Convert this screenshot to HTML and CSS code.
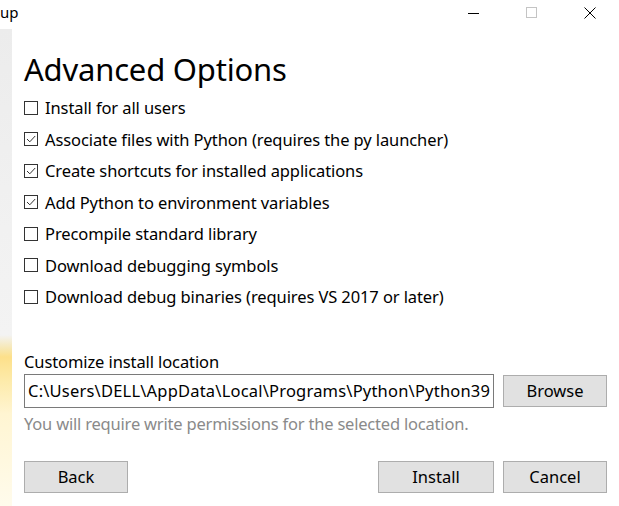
FILE: index.html
```html
<!DOCTYPE html>
<html>
<head>
<meta charset="utf-8">
<link rel="stylesheet" href="styles.css">
</head>
<body>
<div class="window">
  <div class="titlebar">
    <span class="title">up</span>
    <div class="caption">
      <span class="cap-btn"><svg width="12" height="12" viewBox="0 0 12 12"><path d="M0 6.5H11" stroke="#000" stroke-width="1"/></svg></span>
      <span class="cap-btn"><svg width="12" height="12" viewBox="0 0 12 12"><rect x="0.5" y="0.5" width="10" height="10" fill="none" stroke="#c4c4c4" stroke-width="1"/></svg></span>
      <span class="cap-btn"><svg width="12" height="12" viewBox="0 0 12 12"><path d="M0.5 0.5L11.5 11.5M11.5 0.5L0.5 11.5" stroke="#000" stroke-width="1"/></svg></span>
    </div>
  </div>
  <div class="body-area">
    <div class="sidebar"></div>
    <div class="content">
      <h1 class="heading">Advanced Options</h1>
      <ul class="options">
        <li class="option"><span class="box"></span>Install for all users</li>
        <li class="option"><span class="box checked"><svg width="12" height="12" viewBox="0 0 12 12"><path d="M2 6L4.8 8.8L10.2 3" fill="none" stroke="#333" stroke-width="1"/></svg></span>Associate files with Python (requires the py launcher)</li>
        <li class="option"><span class="box checked"><svg width="12" height="12" viewBox="0 0 12 12"><path d="M2 6L4.8 8.8L10.2 3" fill="none" stroke="#333" stroke-width="1"/></svg></span>Create shortcuts for installed applications</li>
        <li class="option"><span class="box checked"><svg width="12" height="12" viewBox="0 0 12 12"><path d="M2 6L4.8 8.8L10.2 3" fill="none" stroke="#333" stroke-width="1"/></svg></span>Add Python to environment variables</li>
        <li class="option"><span class="box"></span>Precompile standard library</li>
        <li class="option"><span class="box"></span>Download debugging symbols</li>
        <li class="option"><span class="box"></span>Download debug binaries (requires VS 2017 or later)</li>
      </ul>
      <div class="location">
        <div class="loc-label">Customize install location</div>
        <div class="loc-row">
          <div class="path-input">C:\Users\DELL\AppData\Local\Programs\Python\Python39</div>
          <button class="btn browse">Browse</button>
        </div>
        <div class="hint">You will require write permissions for the selected location.</div>
      </div>
      <div class="actions">
        <button class="btn">Back</button>
        <div class="actions-right">
          <button class="btn install">Install</button>
          <button class="btn">Cancel</button>
        </div>
      </div>
    </div>
  </div>
</div>
</body>
</html>
```

FILE: styles.css
```css
* { box-sizing: border-box; }
html, body { margin: 0; padding: 0; background: #fff; }
body {
  font-family: "Segoe UI", "Noto Sans", "Open Sans", sans-serif;
  color: #000;
  width: 619px;
  height: 506px;
  overflow: hidden;
}
.window { display: flex; flex-direction: column; height: 506px; }
.titlebar {
  height: 29px;
  display: flex;
  justify-content: space-between;
  align-items: flex-start;
  flex: none;
}
.title {
  font-size: 15px;
  line-height: 15px;
  padding-top: 5px;
  margin-left: 0;
}
.caption { display: flex; }
.cap-btn {
  width: 58px;
  height: 29px;
  display: flex;
  align-items: center;
  justify-content: center;
  padding-bottom: 4px;
}
.body-area { flex: 1; display: flex; }
.sidebar {
  width: 12px;
  flex: none;
  background: linear-gradient(to bottom, #ececec 0, #f1f1f1 200px, #f3f3f3 306px, #f7e7b0 320px, #fde08a 328px, #fdeaa8 350px, #fff5d2 385px, #fffbec 477px);
}
.content {
  flex: 1;
  padding-left: 12px;
  display: flex;
  flex-direction: column;
}
.heading {
  margin: 0;
  font-weight: 400;
  font-size: 31px;
  line-height: 36px;
  margin-top: 22px;
  letter-spacing: -0.2px;
}
.options {
  list-style: none;
  margin: 0;
  padding: 0;
  margin-top: 5px;
}
.option {
  height: 31.5px;
  display: flex;
  align-items: center;
  font-size: 16.5px;
  letter-spacing: -0.1px;
}
.box {
  width: 14px;
  height: 14px;
  border: 1px solid #333;
  margin-right: 7px;
  display: flex;
  align-items: center;
  justify-content: center;
  flex: none;
  background: #fff;
}
.location { margin-top: 39px; }
.loc-label { font-size: 16.5px; line-height: 20px; letter-spacing: -0.1px; }
.loc-row {
  display: flex;
  align-items: center;
  margin-top: 2px;
  gap: 9px;
}
.path-input {
  width: 470px;
  height: 34px;
  border: 1px solid #7a7a7a;
  font-size: 16.5px;
  line-height: 32px;
  padding-left: 3px;
  letter-spacing: 0.2px;
  white-space: nowrap;
  overflow: hidden;
}
.btn {
  font-family: inherit;
  font-size: 16.5px;
  color: #000;
  background: #e1e1e1;
  border: 1px solid #adadad;
  width: 104px;
  height: 32px;
  padding: 0;
  border-radius: 0;
}
.hint {
  color: #8a8a8a;
  font-size: 16.5px;
  line-height: 20px;
  margin-top: 6px;
  letter-spacing: -0.2px;
}
.actions {
  display: flex;
  justify-content: space-between;
  margin-top: 27px;
  padding-right: 12px;
}
.actions-right { display: flex; gap: 9px; }
.btn.install { width: 116px; }
```
